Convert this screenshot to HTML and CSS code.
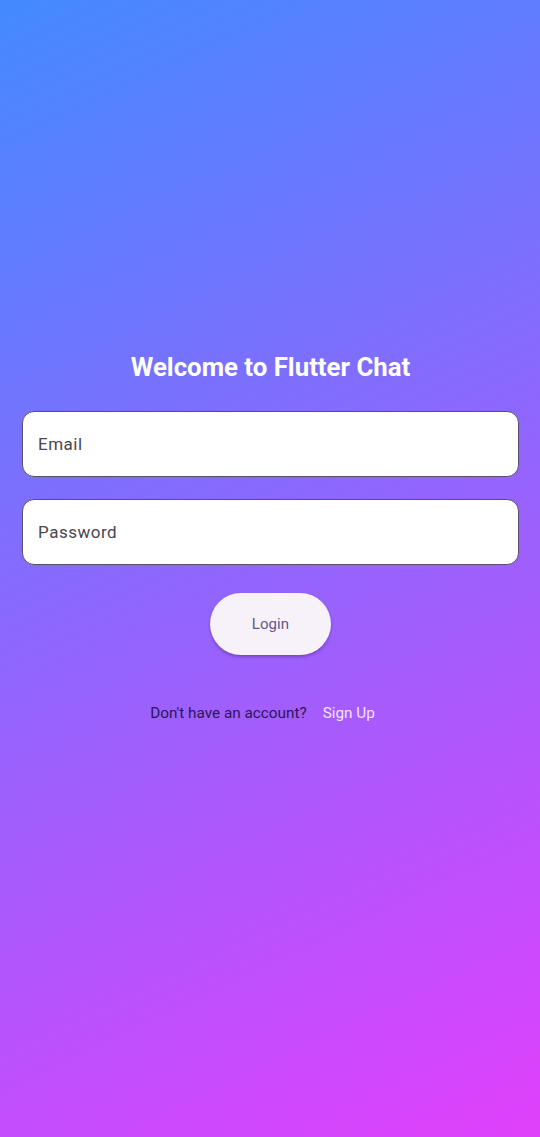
FILE: index.html
```html
<!DOCTYPE html>
<html lang="en">
<head>
<meta charset="utf-8">
<title>Flutter Chat Login</title>
<link rel="stylesheet" href="styles.css">
</head>
<body>
<main class="screen">
  <h1 class="title">Welcome to Flutter Chat</h1>
  <form class="form">
    <label class="field"><input class="field-input" type="email" placeholder="Email"></label>
    <label class="field"><input class="field-input" type="password" placeholder="Password"></label>
    <button class="login-btn" type="button">Login</button>
  </form>
  <div class="signup-row">
    <span class="signup-text">Don't have an account?</span>
    <a class="signup-link" href="#">Sign Up</a>
  </div>
</main>
</body>
</html>
```
FILE: styles.css
```css
html, body {
  margin: 0;
  padding: 0;
}
body {
  width: 540px;
  height: 1137px;
  background: linear-gradient(154.6deg, #448aff 0%, #e040fb 100%);
  font-family: Roboto, "Noto Sans", "Liberation Sans", sans-serif;
  overflow: hidden;
}
.screen {
  display: flex;
  flex-direction: column;
  align-items: center;
  padding: 352px 21px 0 22px;
}
.title {
  margin: 0;
  font-size: 25.8px;
  line-height: 30px;
  font-weight: 700;
  color: #ffffff;
}
.form {
  width: 100%;
  display: flex;
  flex-direction: column;
  align-items: center;
  margin-top: 29px;
}
.field {
  display: block;
  width: 100%;
  box-sizing: border-box;
  height: 66px;
  background: #ffffff;
  border: 1.3px solid #57506f;
  border-radius: 12px;
  margin-bottom: 22px;
}
.field-input {
  width: 100%;
  height: 100%;
  box-sizing: border-box;
  border: none;
  outline: none;
  background: transparent;
  padding: 0 15px;
  font-family: inherit;
  font-size: 17px;
  letter-spacing: 0.5px;
  color: #1d1b20;
}
.field-input::placeholder {
  color: #49454f;
  opacity: 1;
}
.login-btn {
  margin-top: 6px;
  width: 121px;
  height: 62px;
  border: none;
  border-radius: 31px;
  background: #f7f2fa;
  color: #65558f;
  font-family: inherit;
  font-size: 15px;
  font-weight: 400;
  letter-spacing: 0.1px;
  box-shadow: 0 2px 3px rgba(40, 0, 80, 0.3);
}
.signup-row {
  margin-top: 48px;
  display: flex;
  align-items: center;
  gap: 16px;
  font-size: 15.3px;
  line-height: 20px;
}
.signup-text {
  color: #2d1656;
}
.signup-link {
  color: #f5e3ff;
  text-decoration: none;
  font-weight: 400;
  padding-right: 16px;
}
```
